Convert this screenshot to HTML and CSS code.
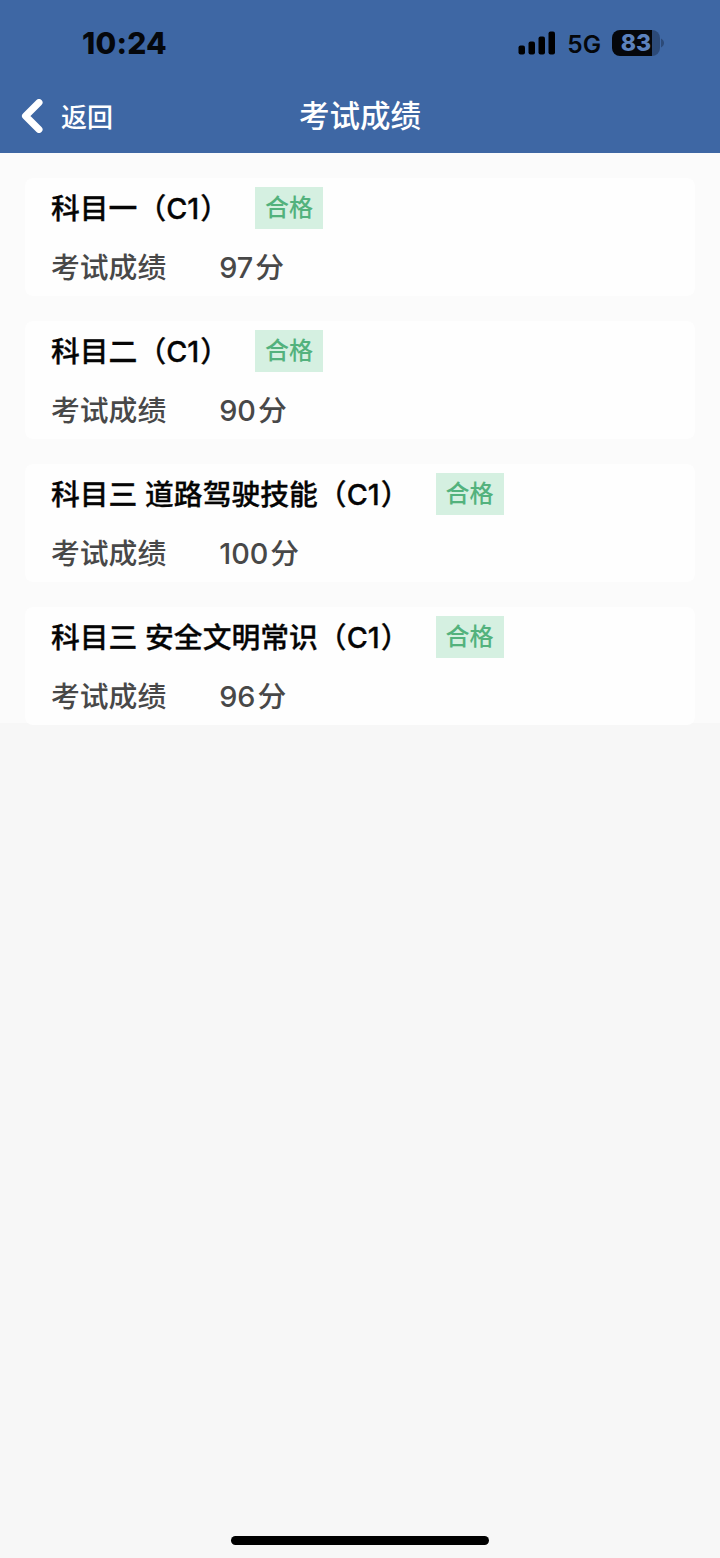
FILE: index.html
```html
<!DOCTYPE html>
<html lang="zh-CN">
<head>
    <meta charset="UTF-8">
    <meta name="viewport" content="width=device-width, initial-scale=1.0">
    <title>考试成绩</title>
    <link rel="stylesheet" href="styles.css">
</head>
<body>
    <header class="header">
        <div class="status">
            <span class="time">10:24</span>
            <div class="status-right">
                <svg class="signal" width="38" height="24" viewBox="0 0 38 24">
                    <rect x="0.5" y="14.5" width="6.5" height="9" rx="2"/>
                    <rect x="10.5" y="10.5" width="6.5" height="13" rx="2"/>
                    <rect x="20.5" y="5.5" width="6.5" height="18" rx="2"/>
                    <rect x="30.5" y="0.5" width="6.5" height="23" rx="2"/>
                </svg>
                <span class="network">5G</span>
                <div class="battery"><span class="level">83</span></div>
                <svg class="battery-tip" width="4" height="10" viewBox="0 0 4 10">
                    <path d="M0 0.5C4 2.5 4 7.5 0 9.5Z"/>
                </svg>
            </div>
        </div>
        <nav class="nav">
            <a class="back">
                <svg width="22" height="34" viewBox="0 0 22 34">
                    <path d="M18 3.5L4.5 17L18 30.5"/>
                </svg>
                <span>返回</span>
            </a>
            <h1 class="title">考试成绩</h1>
        </nav>
    </header>
    <main class="list">
        <section class="card">
            <div class="subject"><h2>科目一（C1<i>）</i></h2><span class="badge">合格</span></div>
            <div class="score"><span class="label">考试成绩</span><span><b>97</b>分</span></div>
        </section>
        <section class="card">
            <div class="subject"><h2>科目二（C1<i>）</i></h2><span class="badge">合格</span></div>
            <div class="score"><span class="label">考试成绩</span><span><b>90</b>分</span></div>
        </section>
        <section class="card">
            <div class="subject"><h2>科目三 道路驾驶技能（C1<i>）</i></h2><span class="badge">合格</span></div>
            <div class="score"><span class="label">考试成绩</span><span><b>100</b>分</span></div>
        </section>
        <section class="card">
            <div class="subject"><h2>科目三 安全文明常识（C1<i>）</i></h2><span class="badge">合格</span></div>
            <div class="score"><span class="label">考试成绩</span><span><b>96</b>分</span></div>
        </section>
    </main>
    <div class="home-bar"></div>
</body>
</html>
```
FILE: styles.css
```css
* {
    box-sizing: border-box;
}
body {
    margin: 0;
    height: 1558px;
    display: flex;
    flex-direction: column;
    background-color: #f7f7f7;
    font-family: Inter, "Noto Sans CJK SC", sans-serif;
    font-weight: 500;
}

.header {
    height: 153px;
    background-color: #3e67a4;
}
.status {
    height: 86px;
    padding: 0 55px 0 82px;
    display: flex;
    align-items: center;
    justify-content: space-between;
    color: #05070b;
}
.time {
    font-size: 30px;
    font-weight: 800;
    letter-spacing: 0.2px;
}
.status-right {
    display: flex;
    align-items: center;
}
.network {
    margin: 2px 11px 0 11px;
    font-size: 24.5px;
    font-weight: 600;
}
.battery {
    width: 48px;
    height: 26px;
    border-radius: 8px;
    background: linear-gradient(to right, #05070b 40px, #2c4a78 40px);
}
.level {
    display: block;
    line-height: 26px;
    text-align: center;
    font-size: 23px;
    font-weight: 800;
    color: #5c82bd;
}
.battery-tip {
    margin-left: 1px;
    fill: #2c4a78;
}

.nav {
    height: 60px;
    padding: 0 21px;
    display: grid;
    grid-template-columns: 1fr auto 1fr;
    align-items: center;
    color: white;
}
.back {
    display: flex;
    align-items: center;
    gap: 18px;
    font-size: 26px;
}
.back span {
    padding-bottom: 2px;
}
.back path {
    fill: none;
    stroke: white;
    stroke-width: 7;
    stroke-linecap: round;
    stroke-linejoin: round;
}
.title {
    margin: 0;
    padding-bottom: 4px;
    font-size: 30.5px;
    font-weight: 500;
}

.list {
    height: 570px;
    padding: 25px 25px 0;
    display: flex;
    flex-direction: column;
    gap: 25px;
    background-color: #fbfbfb;
}
.card {
    flex: none;
    height: 118px;
    padding: 9px 26px 0;
    border-radius: 8px;
    background-color: #fefefe;
}
.subject {
    height: 42px;
    display: flex;
    align-items: center;
    gap: 26px;
    color: #050505;
}
.subject h2 {
    margin: 0;
    padding-bottom: 4px;
    font-size: 28.8px;
    font-weight: 500;
    white-space: nowrap;
    -webkit-text-stroke: 0.3px;
}
.subject i {
    margin-left: 1px;
    font-style: normal;
}
.badge {
    width: 68px;
    height: 42px;
    line-height: 42px;
    text-align: center;
    font-size: 24px;
    color: #53b27d;
    background-color: #d5f0e1;
}
.score {
    height: 42px;
    margin-top: 17px;
    padding-bottom: 4px;
    display: flex;
    align-items: center;
    gap: 53px;
    font-size: 28.8px;
    color: #484848;
}
.score b {
    margin-right: 2px;
    font-weight: 500;
}

.home-bar {
    width: 258px;
    height: 9px;
    margin: auto auto 13px;
    border-radius: 5px;
    background-color: black;
}
```
